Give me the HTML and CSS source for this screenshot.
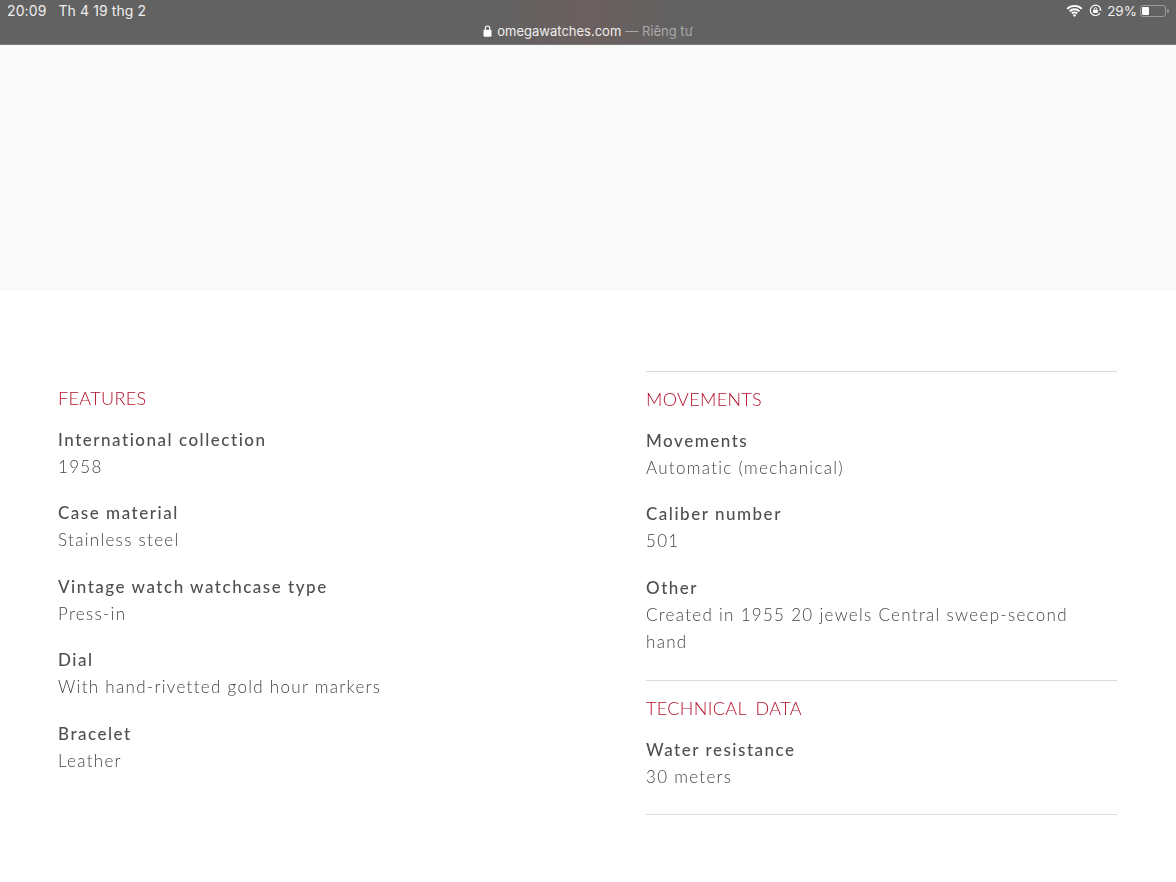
FILE: index.html
```html
<!DOCTYPE html>
<html lang="vi">
<head>
<meta charset="utf-8">
<title>Omega</title>
<link rel="stylesheet" href="styles.css">
</head>
<body>
<header class="bar">
  <div class="status">
    <div class="clock"><span>20:09</span><span>Th 4 19 thg 2</span></div>
    <div class="sys">
      <svg class="wifi" width="17" height="13" viewBox="0 0 17 13"><path d="M1.2 4.9a10.3 10.3 0 0 1 14.6 0M3.6 7.3a6.9 6.9 0 0 1 9.8 0M5.9 9.5a3.6 3.6 0 0 1 5.2 0" fill="none" stroke="#fff" stroke-width="1.9"/><path d="M8.5 13l-1.7-1.9a2.4 2.4 0 0 1 3.4 0z" fill="#fff"/></svg>
      <svg class="rot" width="13" height="13" viewBox="0 0 13 13"><path d="M10.9 9.2A5.2 5.2 0 1 1 11.6 5" fill="none" stroke="#fff" stroke-width="1.2"/><path d="M12.9 6.6L9.9 6.6 11.4 4.2z" fill="#fff"/><rect x="4.2" y="5.7" width="4.6" height="3.4" rx=".6" fill="#fff"/><path d="M5.2 5.8V4.900a1.300 1.300 0 0 1 2.600 0v.9" fill="none" stroke="#fff" stroke-width=".9"/></svg>
      <span class="pct">29%</span>
      <div class="battery"><div class="level"></div></div>
      <div class="nub"></div>
    </div>
  </div>
  <div class="url">
    <svg width="9" height="12" viewBox="0 0 9 12"><rect x="0.500" y="4.800" width="8" height="7" rx="1" fill="#fff"/><path d="M2.300 5V3.200a2.200 2.200 0 0 1 4.400 0V5" fill="none" stroke="#fff" stroke-width="1.100"/></svg>
    <span class="domain">omegawatches.com</span><span class="private">— Riêng tư</span>
  </div>
</header>
<div class="hero"></div>
<main class="specs">
  <section class="col left">
    <h2>FEATURES</h2>
    <dl>
      <dt>International collection</dt><dd>1958</dd>
      <dt>Case material</dt><dd>Stainless steel</dd>
      <dt>Vintage watch watchcase type</dt><dd>Press-in</dd>
      <dt>Dial</dt><dd>With hand-rivetted gold hour markers</dd>
      <dt>Bracelet</dt><dd>Leather</dd>
    </dl>
  </section>
  <div class="col right">
    <section class="group">
      <h2>MOVEMENTS</h2>
      <dl>
        <dt>Movements</dt><dd>Automatic (mechanical)</dd>
        <dt>Caliber number</dt><dd>501</dd>
        <dt>Other</dt><dd>Created in 1955 20 jewels Central sweep-second hand</dd>
      </dl>
    </section>
    <section class="group">
      <h2>TECHNICAL DATA</h2>
      <dl>
        <dt>Water resistance</dt><dd>30 meters</dd>
      </dl>
    </section>
  </div>
</main>
</body>
</html>
```
FILE: styles.css
```css
* { box-sizing: border-box; }
html, body { margin: 0; padding: 0; }
body {
  width: 1176px;
  height: 882px;
  overflow: hidden;
  background: #fff;
  font-family: "Lato", "Liberation Sans", sans-serif;
  color: #555;
}
.bar {
  height: 45px;
  background: linear-gradient(90deg, #626262 0, #626262 42%, #6c5f5f 50%, #626262 58%, #626262 100%);
  border-bottom: 1px solid #7a7a7a;
  color: #fff;
  font-family: "Inter", "Liberation Sans", sans-serif;
  display: flex;
  flex-direction: column;
}
.status {
  height: 21px;
  padding: 0 7px;
  display: flex;
  justify-content: space-between;
  align-items: center;
  font-size: 14px;
  color: #eee;
}
.clock { display: flex; gap: 12px; letter-spacing: .1px; }
.sys { display: flex; align-items: center; }
.wifi { margin-right: 6px; }
.rot { margin-right: 5px; }
.pct { margin-right: 3px; font-size: 13.5px; }
.battery {
  width: 26px;
  height: 12px;
  border: 1px solid #9a9a9a;
  border-radius: 3px;
  padding: 1px;
}
.level { width: 7px; height: 8px; background: #fff; border-radius: 1px; }
.nub { width: 2px; height: 4px; background: #8f8f8f; border-radius: 0 1px 1px 0; margin-left: 1px; }
.url {
  display: flex;
  justify-content: center;
  align-items: center;
  height: 20px;
  font-size: 13px;
}
.url svg { margin-right: 5px; }
.domain { color: #eee; }
.private { color: #a9a9a9; margin-left: 4px; }
.hero { height: 246px; background: #f9f9f9; }
.specs {
  display: flex;
  padding: 80px 59px 0 58px;
  justify-content: space-between;
  align-items: flex-start;
  will-change: transform;
}
.col { width: 471px; }
.left { padding-top: 16px; }
.group { border-top: 1px solid #dcdcdc; padding: 16px 0 24px; }
.group:last-child { border-bottom: 1px solid #dcdcdc; }
h2 {
  margin: 0 0 17px;
  font-size: 18px;
  line-height: 22px;
  font-weight: 300;
  letter-spacing: .35px;
  word-spacing: 4px;
  color: #b3122b;
}
dl { margin: 0; }
dt {
  font-size: 17px;
  line-height: 27px;
  font-weight: 500;
  letter-spacing: 1.52px;
  color: #505050;
}
dd {
  margin: 0 0 19px;
  max-width: 460px;
  font-size: 17px;
  line-height: 27.4px;
  font-weight: 300;
  letter-spacing: 1.3px;
  color: #444;
}
dd:last-child { margin-bottom: 0; }
```
